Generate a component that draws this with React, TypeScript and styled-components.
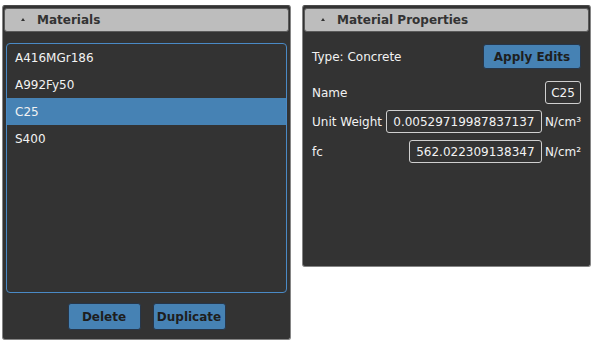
import React from "react";
import styled, { createGlobalStyle } from "styled-components";

const GlobalStyle = createGlobalStyle`
  body {
    margin: 0;
    background: #ffffff;
    font-family: "DejaVu Sans", Verdana, sans-serif;
    font-size: 12px;
  }
`;

const materials = ["A416MGr186", "A992Fy50", "C25", "S400"];

const Page = styled.div`
  display: flex;
  align-items: flex-start;
  gap: 11px;
  padding: 5px 0 0 2px;
`;

const Panel = styled.section<{ $height: number }>`
  box-sizing: border-box;
  width: 289px;
  height: ${(p) => p.$height}px;
  background: #333333;
  border: 1px solid #858585;
  border-top-color: #4a4a4a;
  border-radius: 3px;
  padding: 2px 1px 0;
  display: flex;
  flex-direction: column;
`;

const Header = styled.div`
  box-sizing: border-box;
  height: 24px;
  background: #bdbdbd;
  border: 1px solid #5a5a5a;
  border-radius: 3px;
  display: flex;
  align-items: center;
  gap: 12px;
  padding-left: 16px;
  color: #333333;
  font-weight: bold;
  font-size: 12px;
`;

const Caret = styled.span`
  width: 0;
  height: 0;
  border-left: 2.5px solid transparent;
  border-right: 2.5px solid transparent;
  border-bottom: 3px solid #333333;
  margin-top: -1px;
`;

const ListBox = styled.ul`
  box-sizing: border-box;
  list-style: none;
  margin: 11px 2px 0;
  padding: 0;
  height: 250px;
  border: 1px solid #4a8ac6;
  border-radius: 4px;
  overflow: hidden;
`;

const ListItem = styled.li<{ $selected?: boolean }>`
  height: 27px;
  display: flex;
  align-items: center;
  padding-left: 8px;
  color: #f2f2f2;
  background: ${(p) => (p.$selected ? "#4682b4" : "transparent")};
`;

const ButtonRow = styled.div`
  display: flex;
  justify-content: center;
  gap: 12px;
  margin-top: 10px;
`;

const Button = styled.button<{ $width: number; $height?: number }>`
  box-sizing: border-box;
  width: ${(p) => p.$width}px;
  height: ${(p) => p.$height ?? 27}px;
  background: #4682b4;
  border: 1px solid #26364a;
  border-radius: 3px;
  color: #1e1e1e;
  font-family: inherit;
  font-weight: bold;
  font-size: 12px;
  padding: 0;
`;

const Body = styled.div`
  display: flex;
  flex-direction: column;
  padding: 12px 8px 0 8px;
`;

const Row = styled.div<{ $height: number }>`
  display: flex;
  align-items: center;
  height: ${(p) => p.$height}px;
  color: #f2f2f2;
`;

const Label = styled.span`
  margin-right: auto;
`;

const Field = styled.input<{ $width: number }>`
  box-sizing: border-box;
  width: ${(p) => p.$width}px;
  height: 23px;
  background: transparent;
  border: 1px solid #cfcfcf;
  border-radius: 3px;
  color: #f2f2f2;
  font-family: inherit;
  font-size: 12px;
  text-align: center;
  padding: 0 4px;
  outline: none;
`;

const Unit = styled.span`
  margin-left: 3px;
`;

export default function App() {
  return (
    <>
      <GlobalStyle />
      <Page>
        <Panel $height={335}>
          <Header>
            <Caret />
            Materials
          </Header>
          <ListBox>
            {materials.map((m) => (
              <ListItem key={m} $selected={m === "C25"}>
                {m}
              </ListItem>
            ))}
          </ListBox>
          <ButtonRow>
            <Button $width={73}>Delete</Button>
            <Button $width={73}>Duplicate</Button>
          </ButtonRow>
        </Panel>
        <Panel $height={262}>
          <Header>
            <Caret />
            Material Properties
          </Header>
          <Body>
            <Row $height={25}>
              <Label>Type: Concrete</Label>
              <Button $width={98} $height={25}>
                Apply Edits
              </Button>
            </Row>
            <Row $height={23} style={{ marginTop: 12 }}>
              <Label>Name</Label>
              <Field $width={36} defaultValue="C25" />
            </Row>
            <Row $height={23} style={{ marginTop: 6 }}>
              <Label>Unit Weight</Label>
              <Field $width={156} defaultValue="0.00529719987837137" />
              <Unit>N/cm³</Unit>
            </Row>
            <Row $height={23} style={{ marginTop: 7 }}>
              <Label>fc</Label>
              <Field $width={133} defaultValue="562.022309138347" />
              <Unit>N/cm²</Unit>
            </Row>
          </Body>
        </Panel>
      </Page>
    </>
  );
}
